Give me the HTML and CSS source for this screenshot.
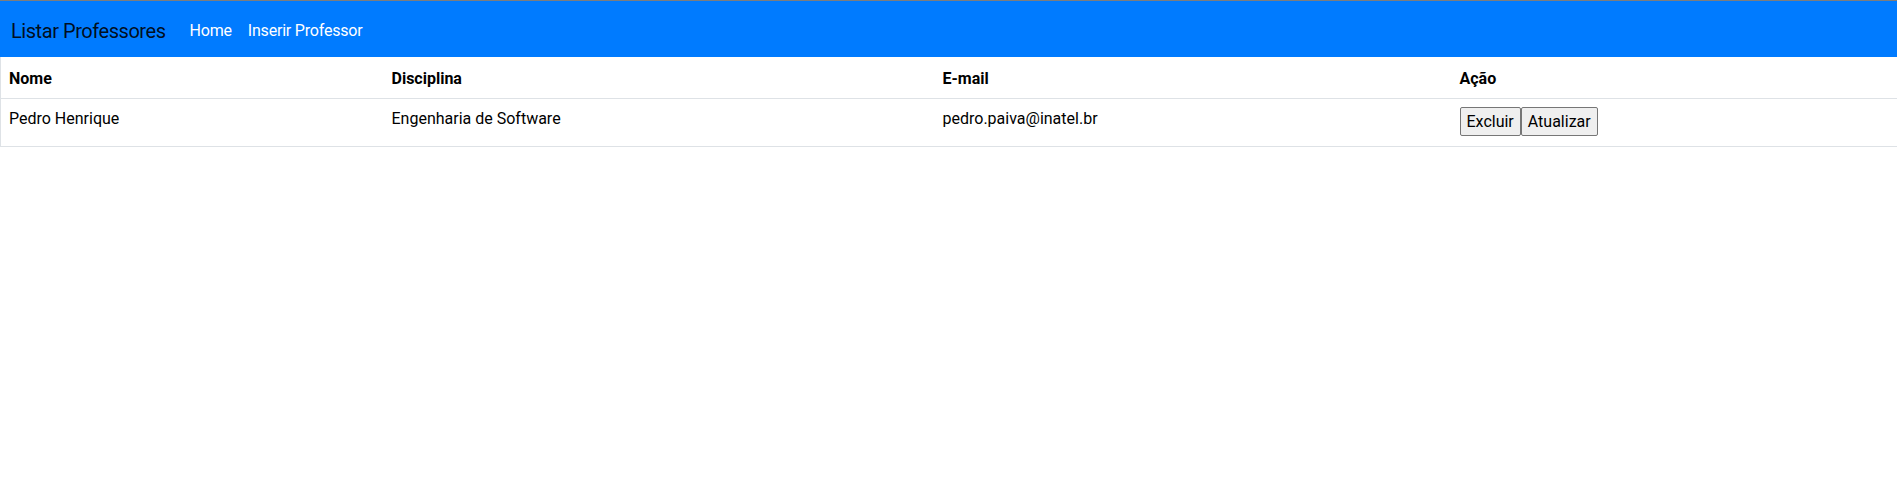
FILE: index.html
```html
<!DOCTYPE html>
<html lang="pt-BR">
<head>
<meta charset="utf-8">
<title>Listar Professores</title>
<link rel="stylesheet" href="styles.css">
</head>
<body>
<div class="topline"></div>
<nav class="navbar">
  <a class="brand" href="#">Listar Professores</a>
  <ul class="nav">
    <li><a class="nav-link" href="#">Home</a></li>
    <li><a class="nav-link" href="#">Inserir Professor</a></li>
  </ul>
</nav>
<table class="table">
  <colgroup>
    <col class="c-nome">
    <col class="c-disc">
    <col class="c-mail">
    <col class="c-acao">
  </colgroup>
  <thead>
    <tr>
      <th>Nome</th>
      <th>Disciplina</th>
      <th>E-mail</th>
      <th>Ação</th>
    </tr>
  </thead>
  <tbody>
    <tr>
      <td>Pedro Henrique</td>
      <td>Engenharia de Software</td>
      <td>pedro.paiva@inatel.br</td>
      <td class="actions"><div class="btn-group"><button class="btn">Excluir</button><button class="btn">Atualizar</button></div></td>
    </tr>
  </tbody>
</table>
</body>
</html>
```
FILE: styles.css
```css
* { box-sizing: border-box; }
html, body {
  margin: 0;
  padding: 0;
  background: #fff;
}
body {
  font-family: Roboto, "Noto Sans", sans-serif;
  font-size: 16px;
  line-height: 1.5;
  color: #212529;
}
.topline {
  height: 1px;
  background: #7d7d7d;
}
.navbar {
  display: flex;
  align-items: center;
  height: 56px;
  padding: 10px 16px 6px 11px;
  background: #007bff;
}
.brand {
  font-size: 20px;
  line-height: 30px;
  padding: 5px 0;
  margin-right: 16px;
  letter-spacing: -0.45px;
  color: rgba(0, 0, 0, 0.9);
  text-decoration: none;
  white-space: nowrap;
}
.nav {
  display: flex;
  list-style: none;
  margin: 0;
  padding: 0;
}
.nav-link {
  display: block;
  padding: 8px;
  letter-spacing: -0.2px;
  color: #fff;
  text-decoration: none;
}
.table {
  width: 100%;
  border-collapse: collapse;
  border-left: 1px solid #dee2e6;
}
.c-nome { width: 383px; }
.c-disc { width: 551px; }
.c-mail { width: 517px; }
.table th,
.table td {
  text-align: left;
  vertical-align: top;
  border-bottom: 1px solid #dee2e6;
}
.table th {
  padding: 10px 8px 7px;
  font-weight: 700;
  color: #000;
}
.table td {
  padding: 8px;
  color: #000;
}
.table td.actions {
  padding: 8px 8px 10px;
}
.btn-group {
  display: flex;
}
.btn {
  font-family: inherit;
  font-size: 16px;
  line-height: 25px;
  height: 29px;
  padding: 0 6px;
  margin: 0;
  color: #000;
  background: #efefef;
  border: 1px solid #767676;
  border-radius: 2px;
}
```
